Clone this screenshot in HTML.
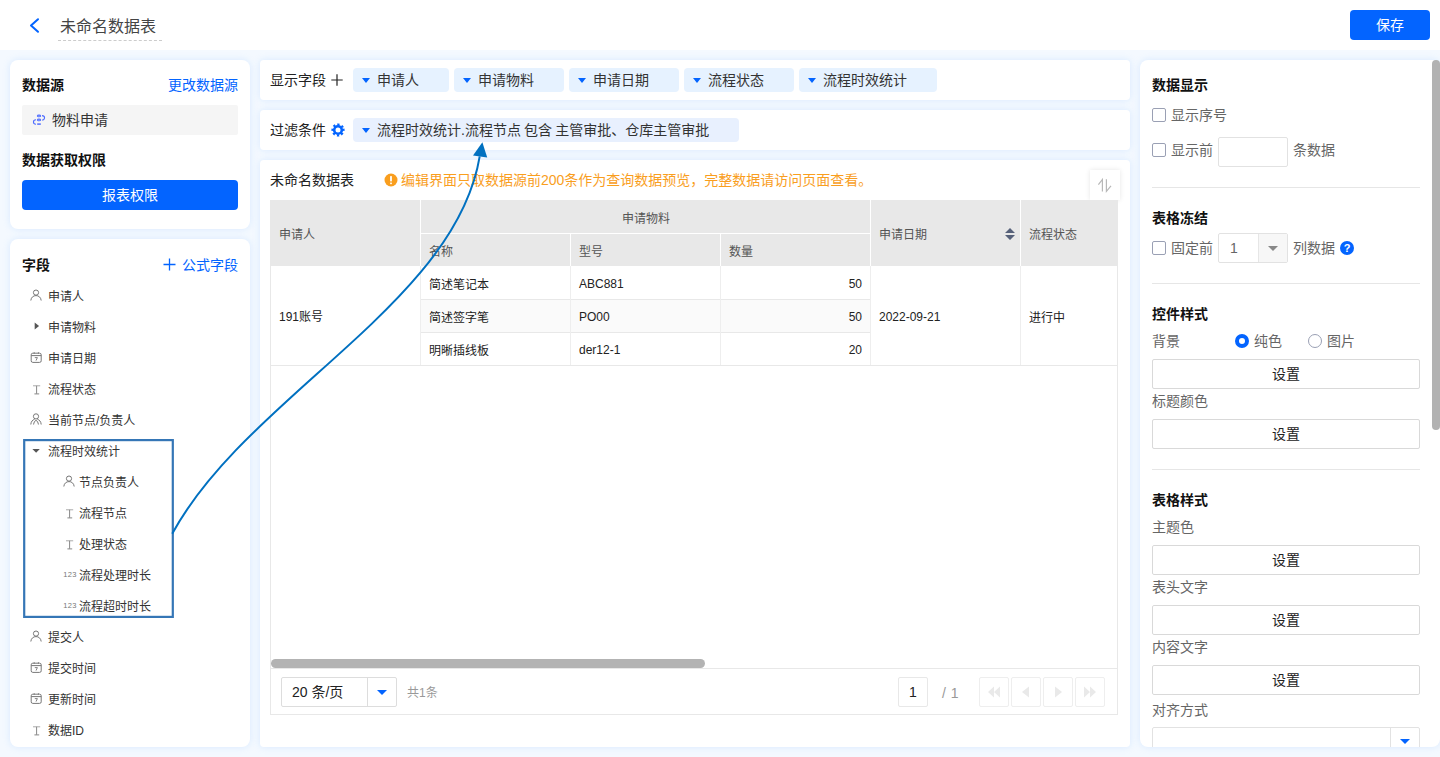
<!DOCTYPE html>
<html lang="zh-CN">
<head>
<meta charset="utf-8">
<title>未命名数据表</title>
<style>
*{box-sizing:border-box;margin:0;padding:0}
html,body{width:1440px;height:757px;overflow:hidden}
body{font-family:"Liberation Sans","Noto Sans CJK SC",sans-serif;font-size:14px;color:#333;background:#f4f9ff;position:relative}
.abs{position:absolute}
.hdr{position:absolute;left:0;top:0;width:1440px;height:50px;background:#fff}
.panel{position:absolute;background:#fff;border-radius:8px;box-shadow:0 0 7px rgba(150,200,255,.3)}
.t{position:absolute;white-space:nowrap;line-height:20px}
.b{font-weight:bold;color:#111}
.blue{color:#0364ff}
.tag{position:absolute;height:24px;top:8px;border-radius:4px;background:#e6f2ff;font-size:14px;line-height:24px;padding-left:24px;white-space:nowrap;color:#333}
.tag:before{content:"";position:absolute;left:9px;top:10px;border:4px solid transparent;border-top:5px solid #0364ff;border-bottom:0}
.fi{position:absolute;left:0;width:240px;height:20px;font-size:12px;line-height:20px;color:#333}
.fi span{position:absolute;left:38px;top:2px;white-space:nowrap}
.fi.c span{left:69px}
.fi svg{position:absolute;left:20px;top:4px;overflow:visible}
.fi.c svg{left:53px}
.btn{position:absolute;left:12px;width:268px;height:30px;border:1px solid #d9d9d9;border-radius:2px;background:#fff;text-align:center;line-height:28px;font-size:14px;color:#222}
.lab{position:absolute;left:12px;font-size:14px;color:#666;line-height:20px;white-space:nowrap}
.hr{position:absolute;left:12px;width:268px;height:1px;background:#e6e6e6}
.cb{position:absolute;width:14px;height:14px;border:1px solid #9aa0b4;border-radius:2px;background:#fff}
.th{position:absolute;font-size:12px;color:#555;line-height:16px;white-space:nowrap}
.td{position:absolute;font-size:12px;color:#222;line-height:16px;white-space:nowrap}
.vl{position:absolute;width:1px;background:#fff}
.hl{position:absolute;height:1px;background:#e8e8e8}
.pb{position:absolute;top:517px;width:30px;height:30px;border:1px solid #eee;border-radius:2px;background:#fff}
.pb svg{position:absolute;left:7px;top:7px}
</style>
</head>
<body>
<!-- header -->
<div class="hdr">
  <svg class="abs" style="left:26px;top:15px" width="16" height="20" viewBox="0 0 16 20"><path d="M12 4.2 L5 10.5 L12 16.8" fill="none" stroke="#0364ff" stroke-width="2" stroke-linecap="round" stroke-linejoin="round"/></svg>
  <div class="t" style="left:60px;top:15px;font-size:16px;line-height:24px;color:#444">未命名数据表</div>
  <div class="abs" style="left:58px;top:40px;width:104px;height:0;border-top:1px dashed #ccc"></div>
  <div class="abs" style="left:1350px;top:10px;width:80px;height:30px;border-radius:4px;background:#0364ff;color:#fff;font-size:14px;line-height:30px;text-align:center">保存</div>
</div>

<!-- left panel 1 -->
<div class="panel" style="left:10px;top:60px;width:240px;height:169px">
  <div class="t b" style="left:12px;top:15px">数据源</div>
  <div class="t blue" style="right:12px;top:15px">更改数据源</div>
  <div class="abs" style="left:12px;top:45px;width:216px;height:30px;background:#f5f5f5;border-radius:2px"></div>
  <svg class="abs" style="left:22px;top:53px" width="14" height="14" viewBox="0 0 14 14" fill="none" stroke="#4f6dff" stroke-width="1.1"><ellipse cx="7" cy="2.9" rx="1.6" ry="0.8"/><ellipse cx="7" cy="6.9" rx="1.6" ry="0.8"/><path d="M5.2 11.1H8.8" stroke-width="1.5"/><path d="M10 2.6C13.4 2.6 13.4 7 10 7"/><path d="M4 6.8C0.6 6.8 0.6 11.2 4 11.2"/></svg>
  <div class="t" style="left:42px;top:50px">物料申请</div>
  <div class="t b" style="left:12px;top:90px">数据获取权限</div>
  <div class="abs" style="left:12px;top:120px;width:216px;height:30px;background:#0364ff;border-radius:4px;color:#fff;text-align:center;line-height:30px;font-size:14px">报表权限</div>
</div>

<!-- left panel 2 -->
<div class="panel" style="left:10px;top:239px;width:240px;height:508px" id="fields">
  <div class="t b" style="left:12px;top:16px">字段</div>
  <div class="t blue" style="right:12px;top:16px"><svg width="13" height="13" viewBox="0 0 13 13" style="vertical-align:-1px;margin-right:6px"><path d="M6.5 0.5V12.5M0.5 6.5H12.5" stroke="#0364ff" stroke-width="1.3" fill="none"/></svg>公式字段</div>
  <div class="fi" style="top:46px"><svg width="12" height="12" viewBox="0 0 12 12" fill="none" stroke="#777" stroke-width="1"><circle cx="6" cy="3.6" r="2.6"/><path d="M0.8 11.5 C1.2 8.2 3.4 6.6 6 6.6 C8.6 6.6 10.8 8.2 11.2 11.5"/></svg><span>申请人</span></div>
  <div class="fi" style="top:77px"><svg width="12" height="12" viewBox="0 0 12 12"><path d="M4.7 2.4 L9.1 6 L4.7 9.6 Z" fill="#555"/></svg><span>申请物料</span></div>
  <div class="fi" style="top:108px"><svg width="12" height="12" viewBox="0 0 12 12" fill="none" stroke="#777" stroke-width="1"><rect x="1.2" y="2.2" width="10" height="9.2" rx="1.6"/><path d="M1.2 4.6H11.2" /><path d="M4.8 6.6H7.4L6 9.6" stroke-width="0.9"/><path d="M4.2 1.2V2.8M8.4 1.2V2.8" stroke-width="0.9"/></svg><span>申请日期</span></div>
  <div class="fi" style="top:139px"><svg width="12" height="12" viewBox="0 0 12 12" fill="none" stroke="#888" stroke-width="1"><path d="M3 3.8H10.2" stroke="#aaa"/><path d="M6.6 3.8V11.8M4.4 11.9H9.2"/></svg><span>流程状态</span></div>
  <div class="fi" style="top:170px"><svg width="12" height="12" viewBox="0 0 12 12" fill="none" stroke="#777" stroke-width="1"><circle cx="6" cy="3.4" r="2.6"/><path d="M0.8 11.5 C1 8.6 2.6 6.8 4.6 6.3"/><path d="M11.2 11.5 C11 8.6 9.4 6.8 7.4 6.3"/><path d="M3.6 11.5 C3.8 9.4 4.8 8 6 7.2 C7.2 8 8.2 9.4 8.4 11.5"/></svg><span>当前节点/负责人</span></div>
  <div class="fi" style="top:201px"><svg width="12" height="12" viewBox="0 0 12 12"><path d="M2.4 5 L9.8 5 L6.1 8.8 Z" fill="#555"/></svg><span>流程时效统计</span></div>
  <div class="fi c" style="top:232px"><svg width="12" height="12" viewBox="0 0 12 12" fill="none" stroke="#777" stroke-width="1"><circle cx="6" cy="3.6" r="2.6"/><path d="M0.8 11.5 C1.2 8.2 3.4 6.6 6 6.6 C8.6 6.6 10.8 8.2 11.2 11.5"/></svg><span>节点负责人</span></div>
  <div class="fi c" style="top:263px"><svg width="12" height="12" viewBox="0 0 12 12" fill="none" stroke="#888" stroke-width="1"><path d="M3 3.8H10.2" stroke="#aaa"/><path d="M6.6 3.8V11.8M4.4 11.9H9.2"/></svg><span>流程节点</span></div>
  <div class="fi c" style="top:294px"><svg width="12" height="12" viewBox="0 0 12 12" fill="none" stroke="#888" stroke-width="1"><path d="M3 3.8H10.2" stroke="#aaa"/><path d="M6.6 3.8V11.8M4.4 11.9H9.2"/></svg><span>处理状态</span></div>
  <div class="fi c" style="top:325px"><svg width="14" height="12" viewBox="0 0 14 12"><text x="7" y="8.8" text-anchor="middle" font-family="Liberation Sans, sans-serif" font-size="7.5" fill="#777" letter-spacing="0.3">123</text></svg><span>流程处理时长</span></div>
  <div class="fi c" style="top:356px"><svg width="14" height="12" viewBox="0 0 14 12"><text x="7" y="8.8" text-anchor="middle" font-family="Liberation Sans, sans-serif" font-size="7.5" fill="#777" letter-spacing="0.3">123</text></svg><span>流程超时时长</span></div>
  <div class="fi" style="top:387px"><svg width="12" height="12" viewBox="0 0 12 12" fill="none" stroke="#777" stroke-width="1"><circle cx="6" cy="3.6" r="2.6"/><path d="M0.8 11.5 C1.2 8.2 3.4 6.6 6 6.6 C8.6 6.6 10.8 8.2 11.2 11.5"/></svg><span>提交人</span></div>
  <div class="fi" style="top:418px"><svg width="12" height="12" viewBox="0 0 12 12" fill="none" stroke="#777" stroke-width="1"><rect x="1.2" y="2.2" width="10" height="9.2" rx="1.6"/><path d="M1.2 4.6H11.2" /><path d="M4.8 6.6H7.4L6 9.6" stroke-width="0.9"/><path d="M4.2 1.2V2.8M8.4 1.2V2.8" stroke-width="0.9"/></svg><span>提交时间</span></div>
  <div class="fi" style="top:449px"><svg width="12" height="12" viewBox="0 0 12 12" fill="none" stroke="#777" stroke-width="1"><rect x="1.2" y="2.2" width="10" height="9.2" rx="1.6"/><path d="M1.2 4.6H11.2" /><path d="M4.8 6.6H7.4L6 9.6" stroke-width="0.9"/><path d="M4.2 1.2V2.8M8.4 1.2V2.8" stroke-width="0.9"/></svg><span>更新时间</span></div>
  <div class="fi" style="top:480px"><svg width="12" height="12" viewBox="0 0 12 12" fill="none" stroke="#888" stroke-width="1"><path d="M3 3.8H10.2" stroke="#aaa"/><path d="M6.6 3.8V11.8M4.4 11.9H9.2"/></svg><span>数据ID</span></div>
</div>

<!-- center rows -->
<div class="panel" style="left:260px;top:60px;width:870px;height:40px;border-radius:4px" id="row1">
  <div class="t" style="left:10px;top:10px;color:#222">显示字段</div>
  <svg class="abs" style="left:71px;top:14.4px" width="12" height="12" viewBox="0 0 12 12"><path d="M6 0.3V11.7M0.3 6H11.7" stroke="#222" stroke-width="1.2" fill="none"/></svg>
  <div class="tag" style="left:93px;width:96px">申请人</div>
  <div class="tag" style="left:194px;width:110px">申请物料</div>
  <div class="tag" style="left:309px;width:110px">申请日期</div>
  <div class="tag" style="left:424px;width:110px">流程状态</div>
  <div class="tag" style="left:539px;width:138px">流程时效统计</div>
</div>
<div class="panel" style="left:260px;top:110px;width:870px;height:40px;border-radius:4px" id="row2">
  <div class="t" style="left:10px;top:10px;color:#222">过滤条件</div>
  <svg class="abs" style="left:71px;top:13px" width="14" height="14" viewBox="0 0 14 14" fill="none" stroke="#0364ff"><circle cx="7" cy="7" r="3.8" stroke-width="2.6"/><circle cx="7" cy="7" r="5.5" stroke-width="2.2" stroke-dasharray="2.16 2.16" transform="rotate(-14 7 7)"/></svg>
  <div class="tag" style="left:93px;width:386px;background:#e8f0fe;word-spacing:-0.75px">流程时效统计.流程节点 包含 主管审批、仓库主管审批</div>
</div>

<!-- center main -->
<div class="panel" style="left:260px;top:160px;width:870px;height:587px;border-radius:4px" id="main">
  <div class="t" style="left:10px;top:10px;font-size:14px;color:#222">未命名数据表</div>
  <svg class="abs" style="left:124px;top:13px" width="14" height="14" viewBox="0 0 14 14"><circle cx="7" cy="7" r="6.5" fill="#f99e1e"/><rect x="6.1" y="3" width="1.8" height="5.4" rx=".6" fill="#fff"/><rect x="6.1" y="9.4" width="1.8" height="1.8" rx=".6" fill="#fff"/></svg>
  <div class="t" style="left:141px;top:10px;font-size:14px;color:#f99e1e">编辑界面只取数据源前200条作为查询数据预览，完整数据请访问页面查看。</div>
  <div class="abs" style="left:830px;top:10px;width:30px;height:30px;background:#fff;box-shadow:0 0 5px rgba(0,0,0,.10)"></div>
  <svg class="abs" style="left:0;top:0;overflow:visible" width="10" height="10" fill="none" stroke="#b8b8b8" stroke-width="1.2"><path d="M838.4 24.6L842.4 19.4V31.4M846.4 19.2V31.4L851 25.8"/></svg>
  <!-- table frame -->
  <div class="abs" style="left:10px;top:40px;width:848px;height:515px;border:1px solid #e8e8e8;border-top:0"></div>
  <div class="abs" style="left:10px;top:40px;width:848px;height:66px;background:#e8e8e8"></div>
  <!-- header separators -->
  <div class="vl" style="left:160px;top:40px;height:66px"></div>
  <div class="vl" style="left:310px;top:74px;height:32px"></div>
  <div class="vl" style="left:460px;top:74px;height:32px"></div>
  <div class="vl" style="left:610px;top:40px;height:66px"></div>
  <div class="vl" style="left:760px;top:40px;height:66px"></div>
  <div class="abs" style="left:160px;top:73px;width:450px;height:1px;background:#fff"></div>
  <div class="th" style="left:19px;top:67px">申请人</div>
  <div class="th" style="left:362px;top:51px">申请物料</div>
  <div class="th" style="left:169px;top:84px">名称</div>
  <div class="th" style="left:319px;top:84px">型号</div>
  <div class="th" style="left:469px;top:84px">数量</div>
  <div class="th" style="left:619px;top:67px">申请日期</div>
  <svg class="abs" style="left:745px;top:66.5px" width="10" height="14" viewBox="0 0 10 14"><path d="M5 0.9L10 6H0Z M5 13.1L10 8H0Z" fill="#56617a"/></svg>
  <div class="th" style="left:769px;top:67px">流程状态</div>
  <!-- body -->
  <div class="abs" style="left:160px;top:139px;width:450px;height:33px;background:#fafafa"></div>
  <div class="hl" style="left:160px;top:139px;width:450px"></div>
  <div class="hl" style="left:160px;top:172px;width:450px"></div>
  <div class="hl" style="left:10px;top:205px;width:848px"></div>
  <div class="vl" style="left:160px;top:106px;height:99px;background:#eee"></div>
  <div class="vl" style="left:310px;top:106px;height:99px;background:#eee"></div>
  <div class="vl" style="left:460px;top:106px;height:99px;background:#eee"></div>
  <div class="vl" style="left:610px;top:106px;height:99px;background:#eee"></div>
  <div class="vl" style="left:760px;top:106px;height:99px;background:#eee"></div>
  <div class="td" style="left:19px;top:149px">191账号</div>
  <div class="td" style="left:169px;top:117px">简述笔记本</div>
  <div class="td" style="left:169px;top:150px">简述签字笔</div>
  <div class="td" style="left:169px;top:183px">明晰插线板</div>
  <div class="td" style="left:319px;top:116px">ABC881</div>
  <div class="td" style="left:319px;top:149px">PO00</div>
  <div class="td" style="left:319px;top:182px">der12-1</div>
  <div class="td" style="right:268px;top:116px">50</div>
  <div class="td" style="right:268px;top:149px">50</div>
  <div class="td" style="right:268px;top:182px">20</div>
  <div class="td" style="left:619px;top:149px">2022-09-21</div>
  <div class="td" style="left:769px;top:150px">进行中</div>
  <!-- scrollbar -->
  <div class="abs" style="left:11px;top:499px;width:434px;height:9px;border-radius:4.5px;background:#b3b3b3"></div>
  <div class="hl" style="left:10px;top:508px;width:848px"></div>
  <!-- pagination -->
  <div class="abs" style="left:21px;top:517px;width:116px;height:30px;border:1px solid #ddd;border-radius:2px;background:#fff"></div>
  <div class="abs" style="left:107px;top:518px;width:1px;height:28px;background:#ddd"></div>
  <div class="t" style="left:32px;top:522px;font-size:14px;color:#222">20 条/页</div>
  <div class="abs" style="left:117px;top:530px;border:5px solid transparent;border-top:5px solid #0364ff;border-bottom:0"></div>
  <div class="t" style="left:147px;top:523px;font-size:12px;color:#999">共1条</div>
  <div class="abs" style="left:638px;top:517px;width:30px;height:30px;border:1px solid #e8e8e8;border-radius:2px;background:#fff;text-align:center;line-height:29px;font-size:14px;color:#222">1</div>
  <div class="t" style="left:682px;top:523px;font-size:14px;color:#999;word-spacing:1px">/ 1</div>
  <div class="pb" style="left:719px"><svg width="14" height="14" viewBox="0 0 14 14"><path d="M7 1.5V12.5L1 7Z M13 1.5V12.5L7 7Z" fill="#e9e9e9"/></svg></div>
  <div class="pb" style="left:751px"><svg width="14" height="14" viewBox="0 0 14 14"><path d="M10 1.5V12.5L3 7Z" fill="#e9e9e9"/></svg></div>
  <div class="pb" style="left:783px"><svg width="14" height="14" viewBox="0 0 14 14"><path d="M4 1.5V12.5L11 7Z" fill="#e9e9e9"/></svg></div>
  <div class="pb" style="left:815px"><svg width="14" height="14" viewBox="0 0 14 14"><path d="M7 1.5V12.5L13 7Z M1 1.5V12.5L7 7Z" fill="#e9e9e9"/></svg></div>
</div>

<!-- right panel -->
<div class="panel" style="left:1140px;top:60px;width:300px;height:687px;border-radius:8px;overflow:hidden" id="right">
  <div class="t b" style="left:12px;top:15px">数据显示</div>
  <div class="cb" style="left:12px;top:48px"></div>
  <div class="lab" style="left:31px;top:45px">显示序号</div>
  <div class="cb" style="left:12px;top:83px"></div>
  <div class="lab" style="left:31px;top:80px">显示前</div>
  <div class="abs" style="left:78px;top:77px;width:70px;height:30px;border:1px solid #e2e2e2;border-radius:2px;background:#fff"></div>
  <div class="lab" style="left:153px;top:80px">条数据</div>
  <div class="hr" style="top:127px"></div>
  <div class="t b" style="left:12px;top:148px">表格冻结</div>
  <div class="cb" style="left:12px;top:181px"></div>
  <div class="lab" style="left:31px;top:178px">固定前</div>
  <div class="abs" style="left:78px;top:173px;width:70px;height:30px;border:1px solid #e2e2e2;border-radius:2px;background:#fff"></div>
  <div class="abs" style="left:118px;top:174px;width:29px;height:28px;background:#f7f7f7;border-left:1px solid #e6e6e6"></div>
  <div class="t" style="left:90px;top:178px;font-size:14px;color:#666">1</div>
  <div class="abs" style="left:128px;top:186px;border:5px solid transparent;border-top:5px solid #888;border-bottom:0"></div>
  <div class="lab" style="left:153px;top:178px">列数据</div>
  <svg class="abs" style="left:200px;top:181px" width="14" height="14" viewBox="0 0 14 14"><circle cx="7" cy="7" r="7" fill="#0364ff"/><text x="7" y="11" text-anchor="middle" font-family="Liberation Sans, sans-serif" font-weight="bold" font-size="11" fill="#fff">?</text></svg>
  <div class="hr" style="top:223px"></div>
  <div class="t b" style="left:12px;top:244px">控件样式</div>
  <div class="lab" style="left:12px;top:271px">背景</div>
  <div class="abs" style="left:95px;top:274px;width:14px;height:14px;border-radius:50%;border:4px solid #0364ff;background:#fff"></div>
  <div class="lab" style="left:114px;top:271px">纯色</div>
  <div class="abs" style="left:168px;top:274px;width:14px;height:14px;border-radius:50%;border:1px solid #9aa0b4;background:#fff"></div>
  <div class="lab" style="left:187px;top:271px">图片</div>
  <div class="btn" style="top:299px">设置</div>
  <div class="lab" style="left:12px;top:331px">标题颜色</div>
  <div class="btn" style="top:359px">设置</div>
  <div class="hr" style="top:409px"></div>
  <div class="t b" style="left:12px;top:430px">表格样式</div>
  <div class="lab" style="left:12px;top:457px">主题色</div>
  <div class="btn" style="top:485px">设置</div>
  <div class="lab" style="left:12px;top:517px">表头文字</div>
  <div class="btn" style="top:545px">设置</div>
  <div class="lab" style="left:12px;top:577px">内容文字</div>
  <div class="btn" style="top:605px">设置</div>
  <div class="lab" style="left:12px;top:640px">对齐方式</div>
  <div class="abs" style="left:12px;top:667px;width:268px;height:30px;border:1px solid #e2e2e2;border-radius:2px;background:#fff"></div>
  <div class="abs" style="left:250px;top:668px;width:1px;height:28px;background:#e2e2e2"></div>
  <div class="abs" style="left:260px;top:679px;border:5px solid transparent;border-top:5px solid #0364ff;border-bottom:0"></div>
</div>
<div class="abs" style="left:1432px;top:60px;width:8px;height:370px;background:#b2b2b2;border-radius:4px"></div>

<!-- annotation -->
<svg class="abs" style="left:0;top:0;pointer-events:none" width="1440" height="757" viewBox="0 0 1440 757">
  <rect x="24.2" y="440.1" width="148.6" height="176.8" fill="none" stroke="#3576b6" stroke-width="2.2"/>
  <path d="M172.2 533.8 C 246.8 396.3, 455.4 304, 479.7 156.3" fill="none" stroke="#0070c0" stroke-width="2"/>
  <path d="M482.4 142.2 L473 155.4 L487.2 157.6 Z" fill="#0070c0"/>
</svg>
</body>
</html>
